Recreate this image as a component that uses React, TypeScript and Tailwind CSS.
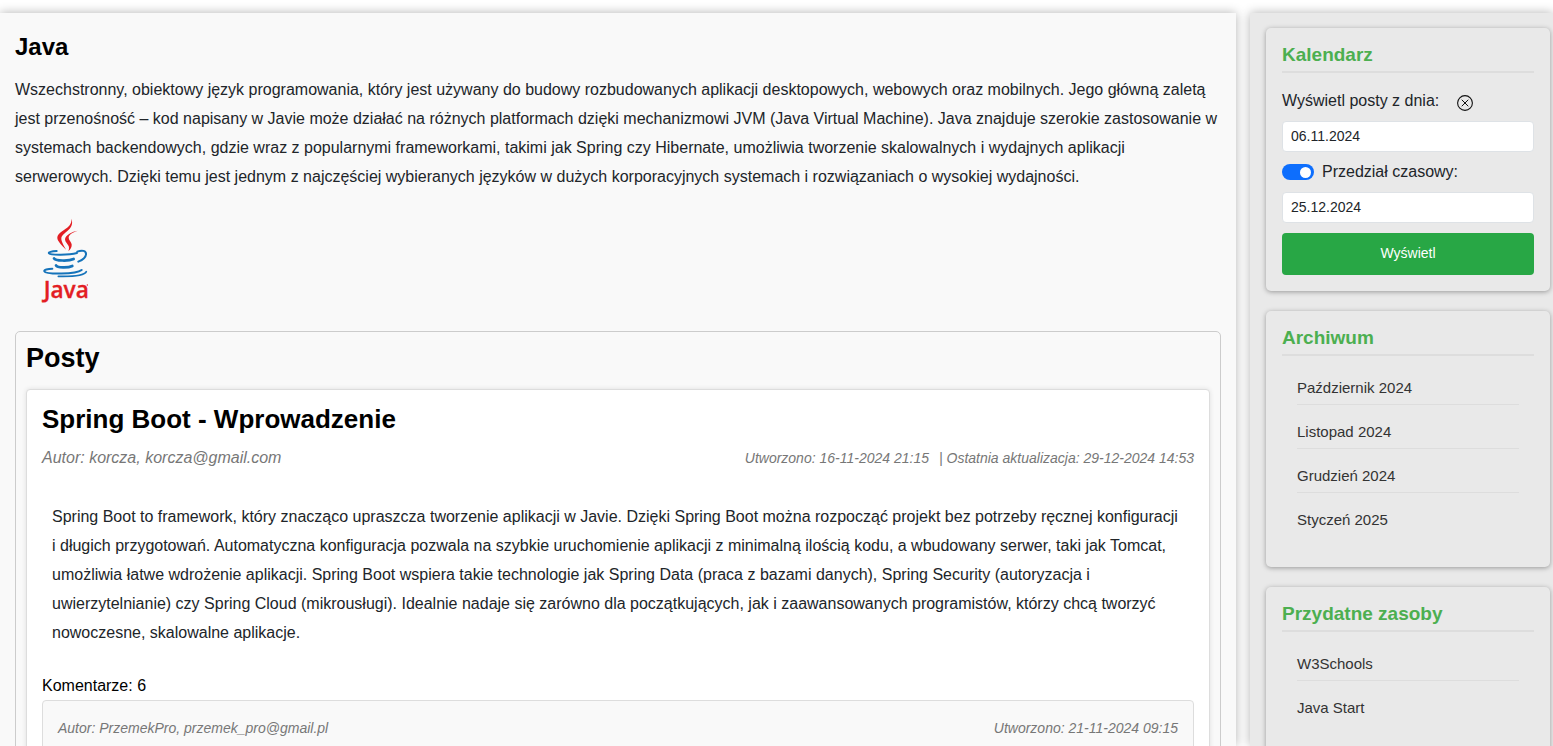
import type { ReactNode } from 'react';

const archive = ['Październik 2024', 'Listopad 2024', 'Grudzień 2024', 'Styczeń 2025'];
const resources = ['W3Schools', 'Java Start'];

function JavaLogo() {
  return (
    <svg viewBox="-15 18 300 300" className="size-[100px]" role="img" aria-label="Java">
      <g fill="#e31e24">
        <path d="M154 41c2 16-8 24-22 34-13 9-21 15-20 25 1 9 13 21 26 34-8-16-14-25-14-33 0-9 8-14 18-23 12-10 18-22 12-37z" />
        <path d="M173 77c-16 2-37 13-38 26 0 8 8 14 11 20 2 6 1 10-1 16 7-6 11-13 10-21-1-8-9-12-9-20 0-9 11-16 27-21z" />
        <text x="71" y="280" fontSize="68" fontWeight="600" stroke="#e31e24" fontFamily="'Open Sans', 'Noto Sans', sans-serif">
          Java
        </text>
        <circle cx="202" cy="240" r="2" />
      </g>
      <g fill="none" stroke="#1573ba" strokeLinecap="round" strokeLinejoin="round">
        <path d="M110 138c-16 1-26 4-23 7 6 6 60 5 84-1" strokeWidth="6" />
        <path d="M172 140c14-6 27-3 26 8-1 11-11 17-23 22" strokeWidth="6" />
        <path d="M102 160c4 8 44 9 59 2" strokeWidth="8" />
        <path d="M108 181c4 8 36 8 49 2" strokeWidth="8" />
        <path d="M97 191c-14 0-26 4-24 8 4 9 95 10 112-4" strokeWidth="6" />
        <path d="M199 200c-5 11-36 15-84 14" strokeWidth="5" />
      </g>
    </svg>
  );
}

function Card({ title, children }: { title: string; children: ReactNode }) {
  return (
    <section className="mb-5 rounded-[5px] bg-[#e9e9e9] px-4 pt-[15px] pb-4 shadow-[0_1px_5px_rgba(0,0,0,0.35)]">
      <h3 className="mb-4 border-b-2 border-[#ddd] pb-[5px] text-[19px] leading-[23px] font-bold text-[#4caf50]">
        {title}
      </h3>
      {children}
    </section>
  );
}

function LinkList({ items }: { items: string[] }) {
  return (
    <ul className="flex flex-col gap-[11px] px-[15px] pb-[15px]">
      {items.map((item) => (
        <li key={item} className="border-b border-[#ddd] py-1 text-[15px] leading-6 last:border-b-0">
          <a href="#" className="text-[#333]">
            {item}
          </a>
        </li>
      ))}
    </ul>
  );
}

const inputClass =
  'block h-[31px] w-full rounded border border-[#dee2e6] bg-white px-2 pb-[2px] text-sm text-[#212529]';

export default function App() {
  return (
    <div className="flex h-screen gap-[14px] overflow-hidden bg-white pt-[13px] font-['Liberation_Sans',Arial,sans-serif] text-base text-black">
      <main className="min-w-0 flex-1 bg-[#f9f9f9] p-[15px] shadow-[0_0_10px_rgba(0,0,0,0.3)]">
        <h2 className="text-2xl leading-[38px] font-bold">Java</h2>
        <p className="mt-[9px] leading-[29px] text-[#212529]">
          Wszechstronny, obiektowy język programowania, który jest używany do budowy rozbudowanych aplikacji
          desktopowych, webowych oraz mobilnych. Jego główną zaletą jest przenośność – kod napisany w Javie może
          działać na różnych platformach dzięki mechanizmowi JVM (Java Virtual Machine). Java znajduje szerokie
          zastosowanie w systemach backendowych, gdzie wraz z popularnymi frameworkami, takimi jak Spring czy
          Hibernate, umożliwia tworzenie skalowalnych i wydajnych aplikacji serwerowych. Dzięki temu jest jednym z
          najczęściej wybieranych języków w dużych korporacyjnych systemach i rozwiązaniach o wysokiej wydajności.
        </p>
        <div className="my-5">
          <JavaLogo />
        </div>

        <section className="rounded-[5px] border border-[#ccc] p-[10px]">
          <h2 className="mb-[15px] text-[27px] leading-8 font-bold">Posty</h2>
          <article className="rounded border border-[#ddd] bg-white p-[15px] shadow-[0_0_5px_rgba(0,0,0,0.1)]">
            <h3 className="text-[26px] leading-7 font-bold">Spring Boot - Wprowadzenie</h3>
            <div className="mt-[13px] flex items-center justify-between leading-6 text-[#777] italic">
              <span>Autor: korcza, korcza@gmail.com</span>
              <span className="flex gap-[10px] text-sm">
                <span>Utworzono: 16-11-2024 21:15</span>
                <span>| Ostatnia aktualizacja: 29-12-2024 14:53</span>
              </span>
            </div>
            <p className="mt-8 px-[10px] leading-[29px] text-[#212529]">
              Spring Boot to framework, który znacząco upraszcza tworzenie aplikacji w Javie. Dzięki Spring Boot można
              rozpocząć projekt bez potrzeby ręcznej konfiguracji i długich przygotowań. Automatyczna konfiguracja
              pozwala na szybkie uruchomienie aplikacji z minimalną ilością kodu, a wbudowany serwer, taki jak Tomcat,
              umożliwia łatwe wdrożenie aplikacji. Spring Boot wspiera takie technologie jak Spring Data (praca z
              bazami danych), Spring Security (autoryzacja i uwierzytelnianie) czy Spring Cloud (mikrousługi). Idealnie
              nadaje się zarówno dla początkujących, jak i zaawansowanych programistów, którzy chcą tworzyć
              nowoczesne, skalowalne aplikacje.
            </p>
            <h4 className="mt-[27px] mb-[2px] leading-6">Komentarze: 6</h4>
            <div className="flex justify-between rounded border border-[#ddd] bg-[#f9f9f9] px-[15px] pt-[15px] pb-24 text-sm leading-6 text-[#777] italic">
              <span>Autor: PrzemekPro, przemek_pro@gmail.pl</span>
              <span>Utworzono: 21-11-2024 09:15</span>
            </div>
          </article>
        </section>
      </main>

      <aside className="w-[303px] shrink-0 bg-[#e9e9e9] pt-[15px] pr-[3px] pl-4 shadow-[0_0_10px_rgba(0,0,0,0.3)]">
        <Card title="Kalendarz">
          <form onSubmit={(event) => event.preventDefault()} className="text-[#212529]">
            <div className="mb-2 flex h-6 items-center gap-[18px]">
              <label htmlFor="date-from">Wyświetl posty z dnia:</label>
              <button type="button" aria-label="Wyczyść" className="pt-1">
                <svg viewBox="0 0 16 16" className="size-4" fill="none" stroke="#111" strokeLinecap="round">
                  <circle cx="8" cy="8" r="7.4" strokeWidth="1.1" />
                  <path d="M5 5l6 6M11 5l-6 6" />
                </svg>
              </button>
            </div>
            <input id="date-from" type="text" defaultValue="06.11.2024" className={inputClass} />
            <div className="my-2 flex h-6 items-center gap-2">
              <input
                id="range"
                type="checkbox"
                defaultChecked
                className="flex h-4 w-8 appearance-none items-center rounded-full bg-[#0d6efd] px-[3px] before:size-[11px] before:rounded-full before:bg-white checked:justify-end"
              />
              <label htmlFor="range">Przedział czasowy:</label>
            </div>
            <input
              type="text"
              aria-label="Data końcowa"
              defaultValue="25.12.2024"
              className={inputClass}
            />
            <button
              type="submit"
              className="mt-[10px] block h-[42px] w-full rounded bg-[#28a745] pb-[2px] text-sm text-white"
            >
              Wyświetl
            </button>
          </form>
        </Card>
        <Card title="Archiwum">
          <LinkList items={archive} />
        </Card>
        <Card title="Przydatne zasoby">
          <LinkList items={resources} />
        </Card>
      </aside>
    </div>
  );
}
